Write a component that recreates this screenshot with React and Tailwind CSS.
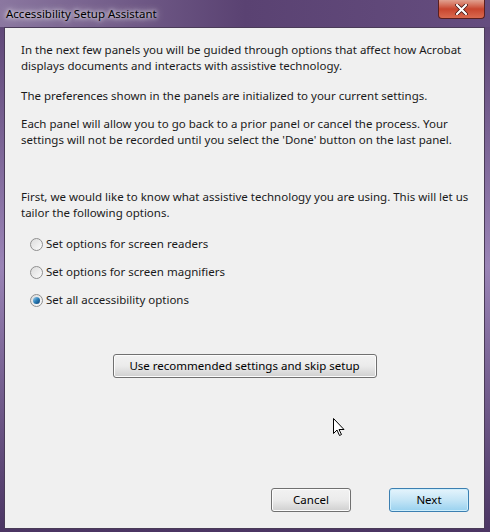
import { useState } from 'react'

function Radio({ checked, label, onClick }) {
    return (
        <label className="flex items-center gap-[3px] h-[16px] cursor-default" onClick={onClick}>
            <span className="w-[13px] h-[13px] rounded-full border border-[#8f8f8f] bg-gradient-to-br from-[#dcdcdc] to-[#fbfbfb] flex items-center justify-center">
                {checked && (
                    <span className="w-[7px] h-[7px] rounded-full bg-gradient-to-br from-[#9fd3f0] via-[#2a7fb8] to-[#0c3f73]" />
                )}
            </span>
            <span>{label}</span>
        </label>
    )
}

function Boton({ children, className = '', primario = false }) {
    return (
        <button
            className={`h-[24px] rounded-[3px] border text-[11.5px] text-black leading-none ${primario
                ? 'border-[#3c7fb1] bg-gradient-to-b from-[#e5f4fc] via-[#c4e5f6] to-[#98d1ef] shadow-[inset_0_0_0_1px_#cdeefc]'
                : 'border-[#707070] bg-gradient-to-b from-[#f2f2f2] via-[#ebebeb] to-[#cfcfcf] shadow-[inset_0_0_0_1px_#fcfcfc]'} ${className}`}
        >
            {children}
        </button>
    )
}

export default function App() {
    const [opcion, setOpcion] = useState(2)

    return (
        <div
            className="w-[490px] h-[532px] relative overflow-hidden flex flex-col bg-gradient-to-b from-[#5a4272] via-[#9a84b6] to-[#4b3563] text-[11.5px] text-[#1a1a1a]"
            style={{ fontFamily: '"Noto Sans", "Open Sans", sans-serif' }}
        >
            <div className="h-[27px] shrink-0 flex items-center pl-[6px] bg-gradient-to-r from-[#8b77a0] via-[#5a4272] to-[#654d7f]">
                <span className="text-[11.5px] text-black [text-shadow:0_0_8px_#ffffff,0_0_4px_#ffffff]">Accessibility Setup Assistant</span>
            </div>

            <div className="absolute top-0 right-[5px] w-[47px] h-[19px] rounded-b-[4px] border border-[#5a1f1f] border-t-0 bg-gradient-to-b from-[#e0a090] via-[#c8452e] to-[#d9694f] flex items-center justify-center">
                <svg width="13" height="11" viewBox="0 0 13 11">
                    <path d="M2 1 L11 10 M11 1 L2 10" stroke="#3a1010" strokeWidth="3.6" strokeLinecap="round" />
                    <path d="M2 1 L11 10 M11 1 L2 10" stroke="#ffffff" strokeWidth="2.2" strokeLinecap="round" />
                </svg>
            </div>

            <div className="ml-[4px] w-[481px] h-[502px] border border-[#4a3b58] bg-[#f0f0f0] pl-[16px] pr-[12px] pt-[14px] flex flex-col leading-[16px]">
                <p>In the next few panels you will be guided through options that affect how Acrobat displays documents and interacts with assistive technology.</p>
                <p className="mt-[14px]">The preferences shown in the panels are initialized to your current settings.</p>
                <p className="mt-[12px]">Each panel will allow you to go back to a prior panel or cancel the process. Your settings will not be recorded until you select the 'Done' button on the last panel.</p>
                <p className="mt-[41px]">First, we would like to know what assistive technology you are using. This will let us tailor the following options.</p>

                <div className="mt-[15px] pl-[9px] flex flex-col gap-[12px]">
                    <Radio checked={opcion === 0} label="Set options for screen readers" onClick={() => setOpcion(0)} />
                    <Radio checked={opcion === 1} label="Set options for screen magnifiers" onClick={() => setOpcion(1)} />
                    <Radio checked={opcion === 2} label="Set all accessibility options" onClick={() => setOpcion(2)} />
                </div>

                <div className="mt-[46px] flex justify-center pr-[4px]">
                    <Boton className="w-[264px]">Use recommended settings and skip setup</Boton>
                </div>

                <div className="flex-1 relative">
                    <svg className="absolute left-[312px] top-[40px]" width="12" height="19" viewBox="0 0 12 19">
                        <path d="M0.5 0.5 L0.5 15.5 L4 12 L6.5 17.5 L8.5 16.5 L6 11.5 L11 11.5 Z" fill="#ffffff" stroke="#000000" strokeWidth="1" strokeLinejoin="miter" />
                    </svg>
                </div>

                <div className="flex justify-end gap-[38px] pr-[3px] pb-[16px]">
                    <Boton className="w-[80px]">Cancel</Boton>
                    <Boton className="w-[80px]" primario>Next</Boton>
                </div>
            </div>
        </div>
    )
}
